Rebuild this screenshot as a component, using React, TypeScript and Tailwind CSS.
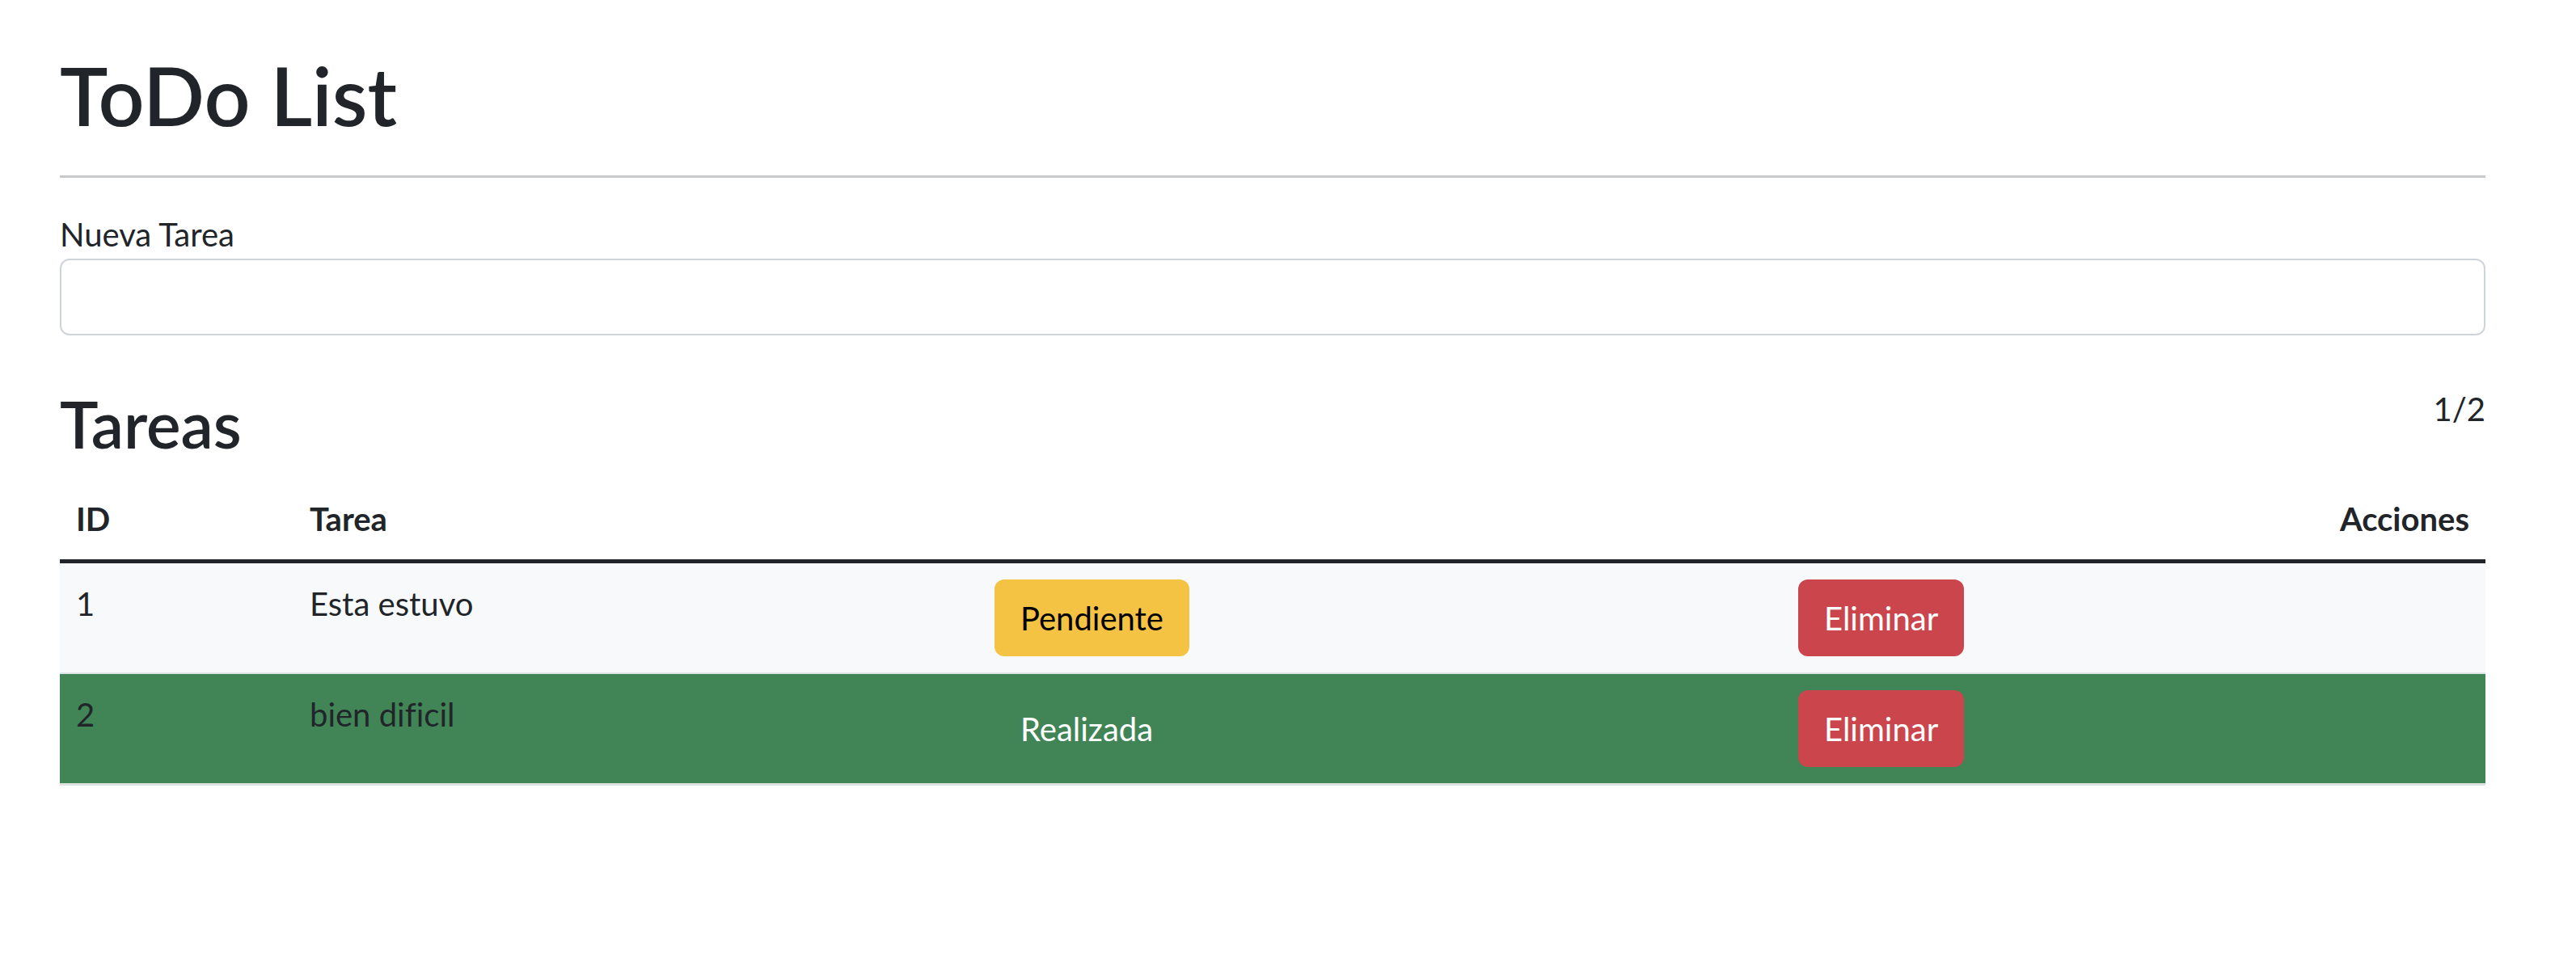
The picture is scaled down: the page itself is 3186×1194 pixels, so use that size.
import React from "react";

interface Task {
  id: number;
  text: string;
  done: boolean;
}

const tasks: Task[] = [
  { id: 1, text: "Esta estuvo", done: false },
  { id: 2, text: "bien dificil", done: true },
];

const App = () => {
  return (
    <div className="min-h-screen bg-white font-['Lato','Open_Sans',sans-serif] [font-variant-ligatures:none] text-[40px] leading-[60px] text-[#212529]">
      <div className="ml-[74px] w-[3000px] pt-[57px]">
        <h1 className="text-[100px] leading-[120px] font-semibold">ToDo List</h1>
        <hr className="mt-[40px] mb-[40px] h-0 border-0 border-t-[3px] border-[#c8c9ca]" />

        <label className="block h-[60px]">Nueva Tarea</label>
        <input
          type="text"
          className="block w-full h-[95px] border-[2.5px] border-[#ced4da] rounded-[12px] px-[30px] outline-none"
        />

        <div className="mt-[61px] flex justify-between items-start">
          <h2 className="text-[80px] leading-[96px] font-semibold">Tareas</h2>
          <span>1/2</span>
        </div>

        <table className="mt-[20px] w-full table-fixed border-collapse">
          <colgroup>
            <col className="w-[289px]" />
            <col className="w-[847px]" />
            <col className="w-[994px]" />
            <col />
          </colgroup>
          <thead>
            <tr className="border-b-[5px] border-[#212529]">
              <th className="p-[20px] text-left font-bold">ID</th>
              <th className="p-[20px] text-left font-bold">Tarea</th>
              <th className="p-[20px]"></th>
              <th className="p-[20px] text-right font-bold">Acciones</th>
            </tr>
          </thead>
          <tbody>
            {tasks.map((t) => (
              <tr
                key={t.id}
                className={
                  t.done
                    ? "bg-[#418557] border-b-[3px] border-[#dde2e3]"
                    : "bg-[#f8f9fa] border-b-[2px] border-[#dde2e2]"
                }
              >
                <td className="p-[20px] align-top">{t.id}</td>
                <td className="p-[20px] align-top">{t.text}</td>
                <td className="p-[20px] align-top">
                  <button
                    className={
                      t.done
                        ? "h-[95px] px-[32px] rounded-[12px] bg-[#418557] text-white"
                        : "h-[95px] px-[32px] rounded-[12px] bg-[#f5c344] text-black"
                    }
                  >
                    {t.done ? "Realizada" : "Pendiente"}
                  </button>
                </td>
                <td className="p-[20px] align-top">
                  <button className="h-[95px] px-[32px] rounded-[12px] bg-[#ca454c] text-white">
                    Eliminar
                  </button>
                </td>
              </tr>
            ))}
          </tbody>
        </table>
      </div>
    </div>
  );
};

export default App;
